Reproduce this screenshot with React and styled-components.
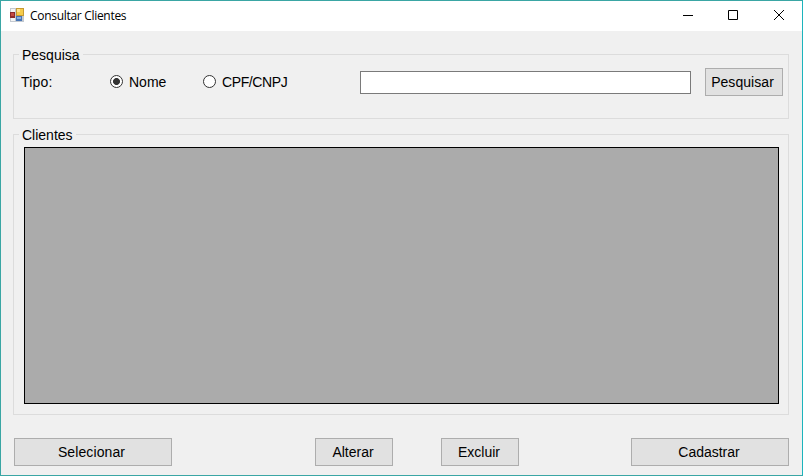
import React, { useState } from "react";
import styled, { createGlobalStyle } from "styled-components";

const GlobalStyle = createGlobalStyle`
  * { box-sizing: border-box; }
  body { margin: 0; background: #f0f0f0; }
`;

const Window = styled.div`
  display: flex;
  flex-direction: column;
  width: 803px;
  height: 476px;
  overflow: hidden;
  border: 1px solid #3aa6a4;
  border-right-color: #1cb4bc;
  background: #f0f0f0;
  color: #000;
  font: 14px/16px "Liberation Sans", Arial, sans-serif;
`;

const TitleBar = styled.header`
  display: flex;
  align-items: center;
  flex: none;
  height: 30px;
  padding-left: 9px;
  background: #fff;
`;

const AppIcon = styled.svg`
  flex: none;
  width: 14px;
  height: 14px;
  margin-bottom: 2px;
`;

const Title = styled.h1`
  flex: 1;
  margin: 0 0 0 6px;
  font: 400 12px/16px "Open Sans", "Noto Sans", sans-serif;
  letter-spacing: -0.3px;
`;

const CaptionButton = styled.button`
  display: flex;
  align-items: center;
  justify-content: center;
  width: ${(p) => p.$width}px;
  height: 30px;
  padding: 0;
  border: 0;
  background: none;
`;

const Content = styled.main`
  display: flex;
  flex-direction: column;
  flex: 1;
  padding: 23px 13px 9px 12px;
`;

const GroupBox = styled.section`
  display: flex;
  flex-direction: column;
  flex: none;
  height: ${(p) => p.$height}px;
  margin-bottom: ${(p) => p.$gap}px;
  border: 1px solid #dcdcdc;
`;

const Legend = styled.h2`
  align-self: flex-start;
  height: 16px;
  margin: -8px 0 0 5px;
  padding: 0 3px;
  background: #f0f0f0;
  font: inherit;
  line-height: 16px;
`;

const SearchRow = styled.div`
  display: flex;
  align-items: center;
  height: 28px;
  margin-top: 5px;
  padding: 0 5px 0 7px;
`;

const FieldLabel = styled.span`
  width: 89px;
  padding-bottom: 1px;
  letter-spacing: 0.2px;
`;

const Option = styled.label`
  display: flex;
  align-items: center;
  gap: 6px;
  width: ${(p) => p.$width}px;
  letter-spacing: ${(p) => p.$spacing || 0}px;
`;

const OptionText = styled.span`
  padding-bottom: 1px;
`;

const Radio = styled.input`
  appearance: none;
  flex: none;
  width: 13px;
  height: 13px;
  margin: 0 0 1px;
  border: 1px solid #333;
  border-radius: 50%;
  background: #fff;
  outline: 0;

  &:checked {
    background: radial-gradient(circle, #333 3.1px, #fff 3.8px);
  }
`;

const SearchInput = styled.input`
  width: 331px;
  height: 23px;
  margin: 0 14px 0 0;
  padding: 2px 4px;
  border: 1px solid #7a7a7a;
  background: #fff;
  font: inherit;
  outline: 0;
`;

const Button = styled.button`
  flex: none;
  width: ${(p) => (p.$wide ? 158 : 78)}px;
  height: 28px;
  padding: 0 ${(p) => p.$shift || 0}px 1px 0;
  border: 1px solid #adadad;
  background: #e1e1e1;
  color: #000;
  font: inherit;
  letter-spacing: ${(p) => p.$spacing || 0}px;
`;

const DataGrid = styled.div`
  flex: 1;
  margin: 4px 9px 10px 10px;
  border: 1px solid #000;
  background: #ababab;
`;

const Actions = styled.footer`
  display: flex;
  padding-left: 1px;
`;

const Spacer = styled.div`
  width: ${(p) => p.$width}px;
`;

function FormIcon() {
  return (
    <AppIcon viewBox="0 0 14 14" shapeRendering="crispEdges">
      <rect x="0" y="0" width="14" height="14" fill="#c3c9d0" />
      <rect x="1" y="1" width="4" height="3" fill="#f4f4f4" />
      <rect x="1" y="10" width="4" height="3" fill="#f4f4f4" />
      <rect x="0" y="4" width="5" height="6" fill="#8d2b2b" />
      <rect x="1" y="5" width="3" height="3" fill="#c54a42" />
      <rect x="6" y="0" width="8" height="8" fill="#c69a32" />
      <rect x="7" y="1" width="6" height="6" fill="#f5cb4b" />
      <rect x="7" y="1" width="3" height="3" fill="#fce391" />
      <rect x="6" y="8" width="6" height="5" fill="#4775b5" />
      <rect x="7" y="9" width="4" height="2" fill="#8aafdf" />
    </AppIcon>
  );
}

function CaptionIcon({ d }) {
  return (
    <svg width="12" height="12" viewBox="0 0 12 12" fill="none" stroke="#000">
      <path d={d} />
    </svg>
  );
}

export default function App() {
  const [kind, setKind] = useState("nome");
  return (
    <>
      <GlobalStyle />
      <Window>
        <TitleBar>
          <FormIcon />
          <Title>Consultar Clientes</Title>
          <CaptionButton $width={44} aria-label="Minimizar">
            <CaptionIcon d="M1 5.5h10" />
          </CaptionButton>
          <CaptionButton $width={46} aria-label="Maximizar">
            <CaptionIcon d="M1.5 .5h9v9h-9z" />
          </CaptionButton>
          <CaptionButton $width={46} aria-label="Fechar">
            <CaptionIcon d="M1 0l10 10M11 0L1 10" />
          </CaptionButton>
        </TitleBar>
        <Content>
          <GroupBox $height={65} $gap={15}>
            <Legend>Pesquisa</Legend>
            <SearchRow>
              <FieldLabel>Tipo:</FieldLabel>
              <Option $width={93}>
                <Radio
                  type="radio"
                  name="tipo"
                  checked={kind === "nome"}
                  onChange={() => setKind("nome")}
                />
                <OptionText>Nome</OptionText>
              </Option>
              <Option $width={157} $spacing={-0.4}>
                <Radio
                  type="radio"
                  name="tipo"
                  checked={kind === "cpf"}
                  onChange={() => setKind("cpf")}
                />
                <OptionText>CPF/CNPJ</OptionText>
              </Option>
              <SearchInput aria-label="Pesquisa" />
              <Button $shift={3} $spacing={0.05}>Pesquisar</Button>
            </SearchRow>
          </GroupBox>
          <GroupBox $height={281} $gap={23}>
            <Legend>Clientes</Legend>
            <DataGrid />
          </GroupBox>
          <Actions>
            <Button $wide $shift={3} $spacing={0.1}>Selecionar</Button>
            <Spacer $width={143} />
            <Button $shift={2}>Alterar</Button>
            <Spacer $width={48} />
            <Button $shift={2}>Excluir</Button>
            <Spacer $width={112} />
            <Button $wide $shift={2}>Cadastrar</Button>
          </Actions>
        </Content>
      </Window>
    </>
  );
}
